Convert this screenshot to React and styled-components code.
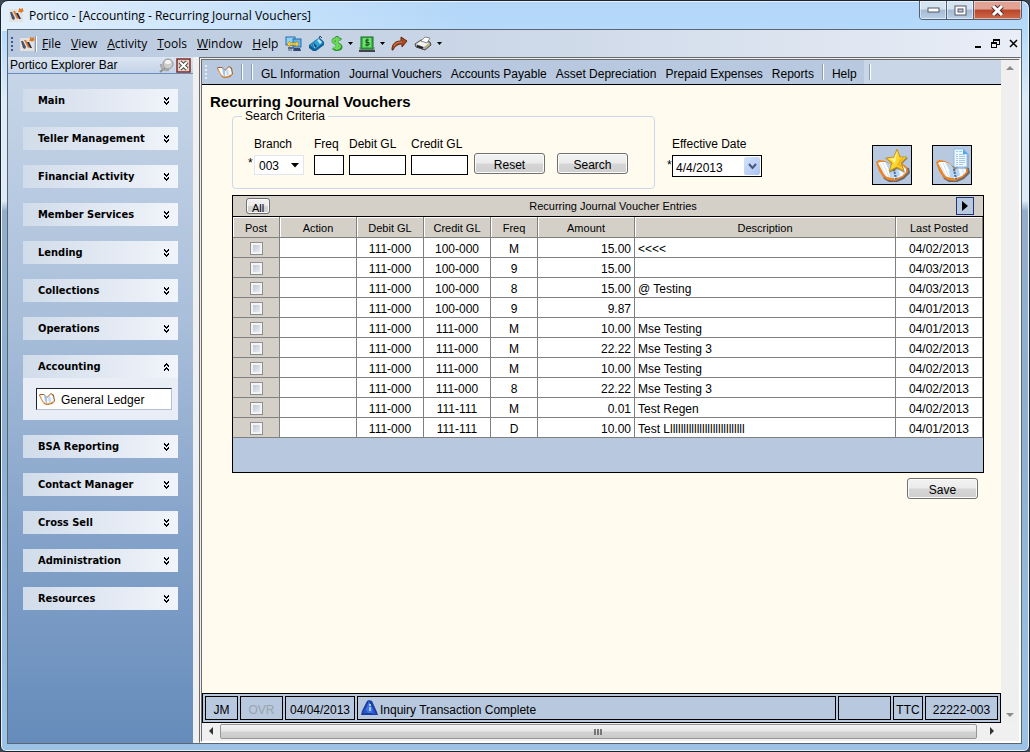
import React, { useState } from 'react'
import styled, { createGlobalStyle } from 'styled-components';

const menus = ["File", "View", "Activity", "Tools", "Window", "Help"];

const sections = [
  "Main",
  "Teller Management",
  "Financial Activity",
  "Member Services",
  "Lending",
  "Collections",
  "Operations",
  "Accounting",
  "BSA Reporting",
  "Contact Manager",
  "Cross Sell",
  "Administration",
  "Resources",
];

const links = [
  "GL Information",
  "Journal Vouchers",
  "Accounts Payable",
  "Asset Depreciation",
  "Prepaid Expenses",
  "Reports",
];

const entries = [
  { debit: "111-000", credit: "100-000", freq: "M", amount: "15.00", text: "<<<<", posted: "04/02/2013" },
  { debit: "111-000", credit: "100-000", freq: "9", amount: "15.00", text: "", posted: "04/03/2013" },
  { debit: "111-000", credit: "100-000", freq: "8", amount: "15.00", text: "@ Testing", posted: "04/03/2013" },
  { debit: "111-000", credit: "100-000", freq: "9", amount: "9.87", text: "", posted: "04/01/2013" },
  { debit: "111-000", credit: "111-000", freq: "M", amount: "10.00", text: "Mse Testing", posted: "04/01/2013" },
  { debit: "111-000", credit: "111-000", freq: "M", amount: "22.22", text: "Mse Testing 3", posted: "04/02/2013" },
  { debit: "111-000", credit: "111-000", freq: "M", amount: "10.00", text: "Mse Testing", posted: "04/02/2013" },
  { debit: "111-000", credit: "111-000", freq: "8", amount: "22.22", text: "Mse Testing 3", posted: "04/02/2013" },
  { debit: "111-000", credit: "111-111", freq: "M", amount: "0.01", text: "Test Regen", posted: "04/02/2013" },
  { debit: "111-000", credit: "111-111", freq: "D", amount: "10.00", text: "Test Lllllllllllllllllllllllllllll", posted: "04/01/2013" },
];

const LogoIcon = () => (
  <svg width="16" height="16" viewBox="0 0 16 16" aria-hidden="true">
    <rect x="1" y="2" width="14" height="13" fill="#e4e1de" />
    <path d="M2 5l2 0 3 6-1 2-2-1z" fill="#4a526b" />
    <path d="M5 4l2 0 4 7-2 1z" fill="#d8792e" />
    <path d="M8 6l2 0 3 6-2 0z" fill="#26304a" />
    <path d="M11 1l2 1 2-1v2l1 1-2 1-1 1-1-1-2 0 1-2z" fill="#e07a1c" />
  </svg>
)

const BookShape = () => (
  <g>
    <path d="M5 19l7 15 5 3 8 0 7-3 6-6-1-5z" fill="#4f4238" opacity=".7" />
    <path d="M4 17l3-2 6 1 4 2 4 4 2 2 4-3 4-2 4 3 1 5-5 5-8 4-7-1-5-3-4-6z" fill="#e98526" />
    <path d="M6 18l2-1 5 0 4 2 4 4 1 10-7-1-3-3z" fill="#fff" />
    <path d="M23 25l4-3 4-1 3 3 0 3-4 4-8 3z" fill="#f3f9ff" />
    <path d="M13 17l4 2 4 4 1 10-4-1-1-7z" fill="#b4d5f5" />
    <path d="M23 25l3-2 2 7-4 3z" fill="#b4d5f5" />
    <path d="M8 19l6 12M11 18l6 14" stroke="#cfe1f4" />
    <path d="M30 22l2 7" stroke="#d5e6f7" />
    <path d="M22 24l2 10" stroke="#2f6fb3" strokeWidth="2" strokeDasharray="2 1" />
  </g>
)

const BookIcon = () => (
  <svg width="16" height="13" viewBox="0 0 16 13" aria-hidden="true">
    <path d="M0 2l1-1 4 0 3 3 4-4 3 2 1 6-3 3-5 1-3-1-2-3z" fill="#a05f2c" />
    <path d="M1 2l4 0 3 3 0 6-3-1-2-3z" fill="#fff" />
    <path d="M8 5l4-4 2 2 1 5-3 2-4 1z" fill="#f4f9ff" />
    <path d="M5 2l3 3 0 6-2-3z" fill="#9dc4ee" />
    <path d="M9 5l2-2 1 5-2 2z" fill="#bcd8f4" />
    <path d="M1 3l3 6 4 2 4-1 3-2" fill="none" stroke="#f0a04a" />
  </svg>
)

const StarBookIcon = () => (
  <svg width="38" height="38" viewBox="1 1 38 38" aria-hidden="true">
    <BookShape />
    <path d="M25 5l3 7 8 1-6 6 3 9-8-4-8 4 3-9-7-6 9-1z" fill="#7c6a3a" opacity=".7" />
    <path d="M25 4l3 8 7 0-6 6 3 8-7-4-8 4 3-8-6-5 8-1z" fill="#ffd62c" stroke="#c8961e" />
    <path d="M25 6l-1 7-1 6-3-4-4-1 6-1z" fill="#fff08e" />
    <path d="M28 14l5-1-5 5 2 5-5-3z" fill="#f0b61c" />
  </svg>
)

const PageBookIcon = () => (
  <svg width="38" height="38" viewBox="1 1 38 38" aria-hidden="true">
    <BookShape />
    <path d="M22 23h14V9" stroke="#7c95b5" fill="none" />
    <path d="M22 4h10l3 4v14H22z" fill="#f0f7fe" stroke="#86bdec" />
    <path d="M31 4l5 5h-5z" fill="#45aaf2" />
    <path
      d="M24 6.500h6M24 9.500h9M24 11.500h9M24 13.500h9M24 15.500h9M24 17.500h9M24 19.500h7"
      stroke="#a3c8ea"
      strokeDasharray="2 1 6 1"
    />
  </svg>
)

const NetworkIcon = () => (
  <svg width="17" height="16" viewBox="0 0 17 16" aria-hidden="true">
    <rect x="1" y="1" width="9" height="8" fill="#8bd3fb" stroke="#2f6aa8" />
    <path d="M3 11h6v2H3z" fill="#55708f" />
    <rect x="8" y="3" width="8" height="8" fill="#5fb4f0" stroke="#2f6aa8" />
    <path d="M9 12h6l1 3H8z" fill="#33496e" />
    <path d="M2 8l3-3v2h6V5l3 3-3 3V9H5v2z" fill="#ffd22b" stroke="#a47808" strokeWidth=".5" />
    <path d="M3 14h4" stroke="#556a8c" />
  </svg>
)

const PhoneIcon = () => (
  <svg width="17" height="16" viewBox="0 0 17 16" aria-hidden="true">
    <path d="M1 9l8-6 3-1 4 4 0 3-8 6-3 0-4-3z" fill="#0f5f94" />
    <path d="M2 9l8-6 5 4-8 6z" fill="#2ea3d8" />
    <path d="M9 4l2-1 3 3-2 2z" fill="#b5ecfa" />
    <path d="M4 9l2-2 3 3-2 2z" fill="#0c4f86" />
    <path d="M5 9h1M6 11h1" stroke="#d9f6ff" />
    <path d="M11 2l1-2 2 2" stroke="#0f4a70" fill="none" />
  </svg>
)

const DollarIcon = () => (
  <svg width="12" height="16" viewBox="0 0 12 16" aria-hidden="true">
    <path d="M10 4C8 2 2 2 2 5c0 3 8 2 8 6 0 3-6 3-8 1M6 0v15" fill="none" stroke="#2f8f34" strokeWidth="3" />
    <path d="M9 4C7 2 2 3 2 5c0 3 8 2 7 6-1 2-5 2-7 0M6 1v13" fill="none" stroke="#6bdb55" strokeWidth="2" />
  </svg>
)

const CashIcon = () => (
  <svg width="16" height="16" viewBox="0 0 16 16" aria-hidden="true">
    <path d="M0 11h16v4H0z" fill="#a8adb3" />
    <path d="M0 15h16" stroke="#3e454c" strokeWidth="2" />
    <rect x="2" y="1" width="12" height="12" fill="#3fbb49" stroke="#146b23" />
    <rect x="4" y="2" width="8" height="9" fill="#74de70" />
    <path d="M10 4H7v2.500h3V9H6M8 2.500v8" fill="none" stroke="#084f18" />
  </svg>
)

const ForwardIcon = () => (
  <svg width="17" height="15" viewBox="0 0 17 15" aria-hidden="true">
    <path d="M1 14c0-6 3-9 9-9V1l6 4-5 6V8c-4 0-7 2-9 6z" fill="#a84a24" stroke="#66270f" />
    <path d="M3 10c1-3 4-4 8-4" fill="none" stroke="#d97f50" />
  </svg>
)

const PrinterIcon = () => (
  <svg width="18" height="15" viewBox="0 0 18 15" aria-hidden="true">
    <path d="M1 8l6-4 9 2 1 3-6 5-9-3z" fill="#a9a9a5" stroke="#4e4e4c" />
    <path d="M2 8l5-3 8 2-5 4z" fill="#f1f1ef" />
    <path d="M7 5l4-4 5 1-3 5z" fill="#fff" stroke="#888" />
    <path d="M3 10l6 2" stroke="#222" strokeWidth="2" />
    <path d="M12 10l3-2" stroke="#e8c52a" strokeWidth="1" />
  </svg>
)

const Caret = () => (
  <svg width="5" height="3" viewBox="0 0 5 3" aria-hidden="true"><path d="M0 0h5L2.500 3z" fill="#000" /></svg>
)

const PinIcon = () => (
  <svg width="15" height="15" viewBox="0 0 15 15" aria-hidden="true">
    <path d="M1 14l5-4" stroke="#8d8d8d" strokeWidth="2" />
    <path d="M2 6c0 5 4 7 8 6" fill="none" stroke="#a5a5a5" strokeWidth="2" />
    <circle cx="9" cy="6" r="5" fill="#cdcdcd" stroke="#939393" />
    <ellipse cx="9" cy="4" rx="3" ry="2" fill="#f3f3f3" />
  </svg>
)

const CloseIcon = () => (
  <svg width="15" height="15" viewBox="0 0 15 15" aria-hidden="true">
    <rect x="1" y="1" width="13" height="13" fill="#e9cfc8" stroke="#7a2d25" strokeWidth="1.500" />
    <path d="M4 4l7 7M11 4l-7 7" stroke="#4b4b4b" strokeWidth="4" />
    <path d="M4 4l7 7M11 4l-7 7" stroke="#fff" strokeWidth="2" />
  </svg>
)

const Chevrons = ({ up }) => (
  <svg width="7" height="8" viewBox="0 0 7 8" aria-hidden="true" shapeRendering="crispEdges">
    <path
      d={up ? "M1 3.500l2.500-2.500 2.500 2.500M1 7.500l2.500-2.500 2.500 2.500" : "M1 .5L3.500 3 6 .5M1 4.500L3.500 7 6 4.500"}
      fill="none"
      stroke="#000"
      strokeWidth="1.500"
    />
  </svg>
)

const InfoIcon = () => (
  <svg width="17" height="16" viewBox="0 0 17 16" aria-hidden="true">
    <path d="M6 1l2-1 3 1 5 11 1 3H0l1-4z" fill="#1c3f9e" />
    <path d="M8 1l6 12H3z" fill="#3f74e6" />
    <path d="M4 8l-2 5h5zM12 8l3 6h-4z" fill="#2b57c8" />
    <path d="M8 4h2v2H8zM8 7h2v4H8z" fill="#a9c6fb" />
  </svg>
)

const Arrow = ({ d, color }) => (
  <svg width="8" height="8" viewBox="0 0 8 8" aria-hidden="true"><path d={d} fill={color} /></svg>
)

const App = () => {
  const [open, setOpen] = useState("Accounting");
  const [posted, setPosted] = useState({});
  const [branch, setBranch] = useState("003");
  const [date, setDate] = useState("4/4/2013");

  const toggleAll = () => {
    const all = {};
    entries.forEach((entry, i) => { all[i] = !posted[0] });
    setPosted(all);
  }

  return (
    <Frame>
      <GlobalStyle />
      <TitleBar>
        <LogoIcon />
        <span>Portico - [Accounting - Recurring Journal Vouchers]</span>
        <CaptionButtons>
          <CaptionButton aria-label="Minimize">
            <svg width="13" height="6"><rect x="1" y="1" width="11" height="4" fill="#fff" stroke="#556" /></svg>
          </CaptionButton>
          <CaptionButton aria-label="Maximize">
            <svg width="13" height="11">
              <rect x="1" y="1" width="11" height="9" fill="#fff" stroke="#556" />
              <rect x="4" y="4" width="5" height="3" fill="#b8cde4" stroke="#556" />
            </svg>
          </CaptionButton>
          <CaptionButton $close aria-label="Close">
            <svg width="13" height="11">
              <path d="M2 1l9 9M11 1l-9 9" stroke="#5b2a2a" strokeWidth="5" />
              <path d="M2 1l9 9M11 1l-9 9" stroke="#fff" strokeWidth="3" />
            </svg>
          </CaptionButton>
        </CaptionButtons>
      </TitleBar>

      <Client>
        <MenuBar>
          <Grip $color="#3d5c96" $gap={6} />
          <LogoIcon />
          <Divider />
          {menus.map((menu) => (
            <MenuButton key={menu}><u>{menu[0]}</u>{menu.slice(1)}</MenuButton>
          ))}
          <IconRow>
            <IconButton aria-label="Connect"><NetworkIcon /></IconButton>
            <IconButton aria-label="Phone"><PhoneIcon /></IconButton>
            <IconButton aria-label="Transactions"><DollarIcon /><Caret /></IconButton>
            <IconButton aria-label="Cash"><CashIcon /><Caret /></IconButton>
            <IconButton aria-label="Forward"><ForwardIcon /></IconButton>
            <IconButton aria-label="Print"><PrinterIcon /><Caret /></IconButton>
          </IconRow>
          <WindowControls>
            <IconButton aria-label="Minimize window">
              <svg width="7" height="9"><path d="M0 8h6" stroke="#000" strokeWidth="2" /></svg>
            </IconButton>
            <IconButton aria-label="Restore window">
              <svg width="9" height="9" shapeRendering="crispEdges">
                <path d="M2 0h7v2H2zM8 2h1v4H6V5h2zM2 2h1v1H2zM0 3h6v2H0zM0 5h1v4H0zM5 5h1v4H5zM1 8h4v1H1z" fill="#000" />
              </svg>
            </IconButton>
            <IconButton aria-label="Close window">
              <svg width="9" height="9"><path d="M1 1l7 7M8 1L1 8" stroke="#000" strokeWidth="1.500" /></svg>
            </IconButton>
          </WindowControls>
        </MenuBar>

        <Body>
          <Explorer>
            <ExplorerHeader>
              <span>Portico Explorer Bar</span>
              <IconButton aria-label="Pin"><PinIcon /></IconButton>
              <IconButton aria-label="Close bar"><CloseIcon /></IconButton>
            </ExplorerHeader>
            <Sections>
              {sections.map((section) => (
                <Section key={section}>
                  <SectionButton onClick={() => setOpen(open === section ? "" : section)}>
                    {section}
                    <Chevrons up={open === section} />
                  </SectionButton>
                  {open === section && (
                    <SectionPanel>
                      <SectionLink href="#ledger"><BookIcon />General Ledger</SectionLink>
                    </SectionPanel>
                  )}
                </Section>
              ))}
            </Sections>
          </Explorer>

          <Workspace>
            <Main>
              <Toolbar>
                <ToolbarMenus>
                  <Grip $color="#e9eef6" $gap={2} />
                  <BookIcon />
                  <Divider />
                  <Divider />
                  <ToolbarLinks>
                    {links.map((link) => <ToolbarButton key={link}>{link}</ToolbarButton>)}
                  </ToolbarLinks>
                  <Divider />
                  <ToolbarButton>Help</ToolbarButton>
                </ToolbarMenus>
                <Divider />
              </Toolbar>

              <Page>
                <Title>Recurring Journal Vouchers</Title>
                <SearchRow>
                  <Criteria>
                    <legend>Search Criteria</legend>
                    <Required>*</Required>
                    <Field $width={50}>
                      <label htmlFor="branch">Branch</label>
                      <SelectBox>
                        <select id="branch" value={branch} onChange={(e) => setBranch(e.target.value)}>
                          <option>003</option>
                        </select>
                        <svg width="8" height="5" viewBox="0 0 8 5" aria-hidden="true"><path d="M0 0h8L4 4.500z" /></svg>
                      </SelectBox>
                    </Field>
                    <Field $width={30} $first>
                      <label htmlFor="freq">Freq</label>
                      <TextInput id="freq" type="text" />
                    </Field>
                    <Field $width={57}>
                      <label htmlFor="debit">Debit GL</label>
                      <TextInput id="debit" type="text" />
                    </Field>
                    <Field $width={57}>
                      <label htmlFor="credit">Credit GL</label>
                      <TextInput id="credit" type="text" />
                    </Field>
                    <Buttons>
                      <PushButton>Reset</PushButton>
                      <PushButton>Search</PushButton>
                    </Buttons>
                  </Criteria>
                  <DateGroup>
                    <Required>*</Required>
                    <Field $width={90}>
                      <label htmlFor="date">Effective Date</label>
                      <DateBox>
                        <input id="date" type="text" value={date} onChange={(e) => setDate(e.target.value)} />
                        <button aria-label="Open calendar">
                          <svg width="9" height="7" aria-hidden="true"><path d="M1 1l3.500 4L8 1" fill="none" stroke="#44597e" strokeWidth="2" /></svg>
                        </button>
                      </DateBox>
                    </Field>
                  </DateGroup>
                  <Tiles>
                    <Tile aria-label="New voucher"><StarBookIcon /></Tile>
                    <Tile aria-label="View voucher"><PageBookIcon /></Tile>
                  </Tiles>
                </SearchRow>

                <Grid>
                  <GridTitle>
                    <AllButton onClick={toggleAll}>All</AllButton>
                    <h2 id="entries">Recurring Journal Voucher Entries</h2>
                    <NextButton aria-label="Next">
                      <svg width="6" height="10" aria-hidden="true"><path d="M0 0l6 5-6 5z" /></svg>
                    </NextButton>
                  </GridTitle>
                  <Table aria-labelledby="entries">
                    <colgroup>
                      <Col $width={47} />
                      <Col $width={77} />
                      <Col $width={67} />
                      <Col $width={67} />
                      <Col $width={47} />
                      <Col $width={97} />
                      <col />
                      <Col $width={87} />
                    </colgroup>
                    <thead>
                      <tr>
                        <th>Post</th>
                        <th>Action</th>
                        <th>Debit GL</th>
                        <th>Credit GL</th>
                        <th>Freq</th>
                        <th>Amount</th>
                        <th>Description</th>
                        <th>Last Posted</th>
                      </tr>
                    </thead>
                    <tbody>
                      {entries.map((entry, i) => (
                        <tr key={i}>
                          <Cell $head>
                            <Check
                              type="checkbox"
                              aria-label={`Post entry ${i + 1}`}
                              checked={!!posted[i]}
                              onChange={() => setPosted({ ...posted, [i]: !posted[i] })}
                            />
                          </Cell>
                          <Cell />
                          <Cell>{entry.debit}</Cell>
                          <Cell>{entry.credit}</Cell>
                          <Cell>{entry.freq}</Cell>
                          <Cell $align="right">{entry.amount}</Cell>
                          <Cell $align="left">{entry.text}</Cell>
                          <Cell>{entry.posted}</Cell>
                        </tr>
                      ))}
                    </tbody>
                  </Table>
                </Grid>
                <SaveRow><PushButton>Save</PushButton></SaveRow>
              </Page>

              <StatusBar>
                <StatusItem $width={33}>JM</StatusItem>
                <StatusItem $width={43} $muted>OVR</StatusItem>
                <StatusItem $width={70}>04/04/2013</StatusItem>
                <StatusItem $grow><InfoIcon />Inquiry Transaction Complete</StatusItem>
                <StatusItem $width={53} />
                <StatusItem $width={30}>TTC</StatusItem>
                <StatusItem $width={73}>22222-003</StatusItem>
              </StatusBar>
            </Main>
            <VScroll>
              <ScrollButton aria-label="Scroll up"><Arrow d="M0 6l4-4 4 4z" color="#8b8b8b" /></ScrollButton>
              <ScrollButton aria-label="Scroll down"><Arrow d="M0 2l4 4 4-4z" color="#8b8b8b" /></ScrollButton>
            </VScroll>
            <HScroll>
              <ScrollButton aria-label="Scroll left"><Arrow d="M6 0v8L2 4z" color="#333" /></ScrollButton>
              <Thumb>
                <svg width="9" height="6" aria-hidden="true" shapeRendering="crispEdges"><path d="M1 0v6M4 0v6M7 0v6" stroke="#777" strokeWidth="2" /></svg>
              </Thumb>
              <ScrollButton aria-label="Scroll right"><Arrow d="M2 0v8l4-4z" color="#333" /></ScrollButton>
            </HScroll>
          </Workspace>
        </Body>
      </Client>
    </Frame>
  )
}

export default App

const GlobalStyle = createGlobalStyle`
  * {
    box-sizing: border-box;
  }
  body {
    margin: 0;
    background-color: #3c4654;
    color: #000;
    font-family: "Liberation Sans", Arial, sans-serif;
    font-size: 12px;
  }
  button, input, select {
    font: inherit;
    color: inherit;
    border-radius: 0;
  }
  button {
    padding: 0;
    border: none;
    background: none;
  }
`;

const Frame = styled.div`
  min-height: 100vh;
  display: flex;
  flex-direction: column;
  padding: 0 7px 7px 6px;
  border: 1px solid #1c232c;
  border-radius: 8px 8px 6px 6px;
  background:
    linear-gradient(90deg, rgba(255, 255, 255, 0.6), rgba(255, 255, 255, 0) 45%) top / 100% 30px no-repeat,
    linear-gradient(180deg, #b3d6f8, #b6dafa 30px, #dcebf7 100px, #dcebf7 200px, #93aecb 210px, #8fb0d2 60%, #9cc3e6);
  box-shadow: inset 0 0 0 1px #e6f2fc;
`;

const TitleBar = styled.header`
  height: 28px;
  display: flex;
  align-items: center;
  gap: 5px;
  padding-left: 1px;
  font-family: "Open Sans", sans-serif;
`;

const CaptionButtons = styled.div`
  display: flex;
  align-self: flex-start;
  margin-left: auto;
  border: 1px solid #4f6076;
  border-top: none;
  border-radius: 0 0 4px 4px;
  overflow: hidden;
`;

const CaptionButton = styled.button`
  width: ${(props) => (props.$close ? "47px" : "27px")};
  height: 18px;
  display: flex;
  align-items: center;
  justify-content: center;
  border-right: ${(props) => (props.$close ? "none" : "1px solid #4f6076")};
  box-shadow: inset 0 0 0 1px rgba(255, 255, 255, 0.5);
  background: ${(props) =>
    props.$close
      ? "linear-gradient(#e0a394 45%, #b8442a 50%, #cf6a4a)"
      : "linear-gradient(#d5e2f0 45%, #a5bad2 50%, #b9d0e8)"};
`;

const Client = styled.div`
  flex: 1;
  display: flex;
  flex-direction: column;
  border: 1px solid #596673;
  background-color: #f0f0f0;
`;

const MenuBar = styled.nav`
  height: 27px;
  display: flex;
  align-items: center;
  padding: 0 3px;
  background: linear-gradient(90deg, #b8c8de, #cfdae9 55%, #e9eef7);
  font-family: "Open Sans", sans-serif;
`;

const Grip = styled.span`
  width: 2px;
  height: 14px;
  margin-right: ${(props) => props.$gap}px;
  background: repeating-linear-gradient(${(props) => props.$color} 0 2px, transparent 2px 4px);
`;

const Divider = styled.span`
  width: 2px;
  height: 16px;
  border-left: 1px solid #8e9cb0;
  border-right: 1px solid #fff;
`;

const MenuButton = styled.button`
  padding: 0 5px;
`;

const IconRow = styled.div`
  display: flex;
  align-items: center;
  gap: 6px;
  margin-left: 2px;
`;

const IconButton = styled.button`
  display: flex;
  align-items: center;
  gap: 5px;
`;

const WindowControls = styled.div`
  display: flex;
  gap: 9px;
  margin-left: auto;
`;

const Body = styled.div`
  flex: 1;
  display: flex;
`;

const Explorer = styled.aside`
  width: 185px;
  flex-shrink: 0;
  background: linear-gradient(180deg, #c9d7e9, #a9bfda 38%, #86a4ca 68%, #668cbb);
`;

const ExplorerHeader = styled.div`
  height: 17px;
  display: flex;
  align-items: center;
  gap: 2px;
  padding: 0 2px;
  border-bottom: 1px solid #6b8fbf;
  background: linear-gradient(#dce5f1, #c3d3e7);
  span {
    flex: 1;
  }
`;

const Sections = styled.div`
  display: flex;
  flex-direction: column;
  gap: 15px;
  padding: 15px;
`;

const Section = styled.section`
  background-color: #e9eef6;
`;

const SectionButton = styled.button`
  width: 100%;
  height: 23px;
  display: flex;
  align-items: center;
  justify-content: space-between;
  padding: 0 8px 0 15px;
  background: linear-gradient(90deg, #d1dcea, #f1f4fa);
  font-family: "DejaVu Sans Condensed", "DejaVu Sans", sans-serif;
  font-size: 11px;
  font-weight: bold;
`;

const SectionPanel = styled.div`
  padding: 10px 6px 10px 13px;
`;

const SectionLink = styled.a`
  height: 22px;
  display: flex;
  align-items: center;
  gap: 6px;
  padding: 1px 0 0 2px;
  border: 1px solid #b3c0dc;
  border-top-color: #1c232c;
  border-left-color: #1c232c;
  background-color: #fff;
  color: #000;
  text-decoration: none;
`;

const Workspace = styled.main`
  flex: 1;
  min-width: 0;
  display: grid;
  grid-template-columns: minmax(0, 1fr) 16px;
  grid-template-rows: 1fr 16px;
  margin-left: 6px;
  padding: 0 2px 2px 0;
  border: 2px solid #fff;
  border-top: 3px double #6a6a6a;
  border-left: 3px double #6a6a6a;
`;

const Main = styled.div`
  display: flex;
  flex-direction: column;
`;

const Toolbar = styled.nav`
  height: 25px;
  display: flex;
  align-items: center;
  gap: 5px;
  border-bottom: 1px solid #000;
  background-color: #c9d6e7;
`;

const ToolbarMenus = styled.div`
  height: 24px;
  display: flex;
  align-items: center;
  gap: 8px;
  padding: 0 7px 0 3px;
  background-color: #b8c8de;
`;

const ToolbarLinks = styled.div`
  display: flex;
  gap: 9px;
`;

const ToolbarButton = styled.button`
  padding-top: 3px;
`;

const Page = styled.div`
  flex: 1;
  padding: 9px 17px 0 30px;
  background-color: #fffbef;
`;

const Title = styled.h1`
  margin: 0 0 0 -22px;
  font-size: 15px;
  line-height: 16px;
`;

const SearchRow = styled.div`
  display: flex;
  align-items: flex-end;
`;

const Criteria = styled.fieldset`
  width: 423px;
  display: flex;
  align-items: flex-end;
  gap: 5px;
  margin: 0;
  padding: 15px 10px 13px 15px;
  border: 1px solid #ccd8ea;
  border-radius: 4px;
  legend {
    margin-left: -6px;
    padding: 0 3px;
    line-height: 12px;
  }
`;

const Required = styled.span`
  width: 6px;
  margin-right: -5px;
  line-height: 24px;
`;

const Field = styled.div`
  width: ${(props) => props.$width}px;
  display: flex;
  flex-direction: column;
  gap: 4px;
  margin-left: ${(props) => (props.$first ? "5px" : "0")};
  label {
    line-height: 14px;
    white-space: nowrap;
  }
`;

const SelectBox = styled.div`
  position: relative;
  select {
    width: 100%;
    height: 20px;
    padding: 2px 4px 0;
    border: 1px solid #dfe6f2;
    background-color: #fff;
    appearance: none;
  }
  svg {
    position: absolute;
    right: 5px;
    top: 8px;
    pointer-events: none;
  }
`;

const TextInput = styled.input`
  width: 100%;
  height: 20px;
  padding: 0 2px;
  border: 1px solid #000;
  background-color: #fff;
`;

const PushButton = styled.button`
  width: 71px;
  height: 21px;
  padding-top: 2px;
  border: 1px solid #707070;
  border-radius: 3px;
  background: linear-gradient(#f3f3f3, #ebebeb 48%, #d6d6d6 52%, #cfcfcf);
  box-shadow: inset 0 0 0 1px #fbfbfb;
`;

const Buttons = styled.div`
  display: flex;
  gap: 12px;
  padding: 0 0 1px 1px;
`;

const DateGroup = styled.div`
  display: flex;
  align-items: flex-end;
  gap: 4px;
  margin: 0 0 12px 12px;
`;

const DateBox = styled.div`
  height: 22px;
  display: flex;
  border: 1px solid #000;
  background-color: #fff;
  input {
    flex: 1;
    min-width: 0;
    padding: 3px 3px 0;
    border: none;
    background: none;
  }
  button {
    width: 16px;
    margin: 1px;
    display: flex;
    align-items: center;
    justify-content: center;
    border-radius: 2px;
    background: linear-gradient(135deg, #d5e2fb, #a9c4f0);
  }
`;

const Tiles = styled.div`
  display: flex;
  gap: 20px;
  margin: 0 12px 4px auto;
`;

const Tile = styled.button`
  width: 40px;
  height: 40px;
  display: flex;
  align-items: center;
  justify-content: center;
  border: 1px solid #000;
  background-color: #b8c8de;
`;

const Grid = styled.section`
  margin-top: 6px;
  padding-bottom: 34px;
  border: 1px solid #000;
  background-color: #b8c8de;
`;

const GridTitle = styled.div`
  height: 21px;
  display: flex;
  align-items: center;
  justify-content: space-between;
  padding: 0 9px 0 13px;
  border-bottom: 1px solid #000;
  background-color: #d4d0c8;
  h2 {
    margin: 0;
    font-size: 11px;
    font-weight: normal;
  }
`;

const AllButton = styled(PushButton)`
  width: 24px;
  height: 16px;
  font-size: 11px;
  line-height: 14px;
`;

const NextButton = styled.button`
  width: 18px;
  height: 18px;
  display: flex;
  align-items: center;
  justify-content: center;
  border: 1px solid #1f3480;
  background-color: #b8c8de;
`;

const Table = styled.table`
  width: 100%;
  table-layout: fixed;
  border-collapse: separate;
  border-spacing: 0;
  th {
    height: 21px;
    padding: 2px 0 0;
    border-right: 1px solid #808080;
    border-bottom: 1px solid #808080;
    background-color: #d4d0c8;
    box-shadow: inset 1px 1px 0 #fff;
    font-size: 11px;
    font-weight: normal;
  }
`;

const Col = styled.col`
  width: ${(props) => props.$width}px;
`;

const Cell = styled.td`
  height: 20px;
  padding: 4px 3px 0;
  border-right: 1px solid #808080;
  border-bottom: 1px solid #808080;
  background-color: ${(props) => (props.$head ? "#d4d0c8" : "#fff")};
  line-height: 15px;
  text-align: ${(props) => props.$align || "center"};
  white-space: nowrap;
`;

const Check = styled.input`
  display: block;
  width: 13px;
  height: 13px;
  margin: 0 auto 2px;
  border: 1px solid #8e8f8f;
  background: linear-gradient(135deg, #b3bfd0, #f6f6f6);
  box-shadow: inset 0 0 0 2px #f4f4f4;
  appearance: none;
  &:checked {
    background: #2b4f8f;
  }
`;

const SaveRow = styled.div`
  display: flex;
  justify-content: flex-end;
  padding: 5px 6px;
`;

const StatusBar = styled.footer`
  height: 30px;
  display: flex;
  gap: 2px;
  padding: 2px;
  border: 1px solid #000;
  background-color: #b8c8de;
`;

const StatusItem = styled.div`
  width: ${(props) => (props.$width ? `${props.$width}px` : "auto")};
  flex: ${(props) => (props.$grow ? 1 : "none")};
  display: flex;
  align-items: center;
  justify-content: ${(props) => (props.$grow ? "flex-start" : "center")};
  gap: 2px;
  padding: ${(props) => (props.$grow ? "3px 0 0 3px" : "3px 0 0")};
  border: 1px solid #000;
  color: ${(props) => (props.$muted ? "#9aa5ae" : "#000")};
  svg {
    margin-bottom: 3px;
  }
`;

const VScroll = styled.div`
  display: flex;
  flex-direction: column;
  justify-content: space-between;
  background-color: #efefef;
`;

const HScroll = styled.div`
  display: flex;
  background-color: #f0f0f0;
`;

const ScrollButton = styled.button`
  width: 18px;
  height: 16px;
  display: flex;
  align-items: center;
  justify-content: center;
`;

const Thumb = styled.div`
  flex: 1;
  display: flex;
  align-items: center;
  justify-content: center;
  margin: 1px 6px 0 0;
  border: 1px solid #979797;
  border-radius: 2px;
  background: linear-gradient(#f4f4f4, #e6e6e6 48%, #d2d2d2 52%, #cacaca);
`;
